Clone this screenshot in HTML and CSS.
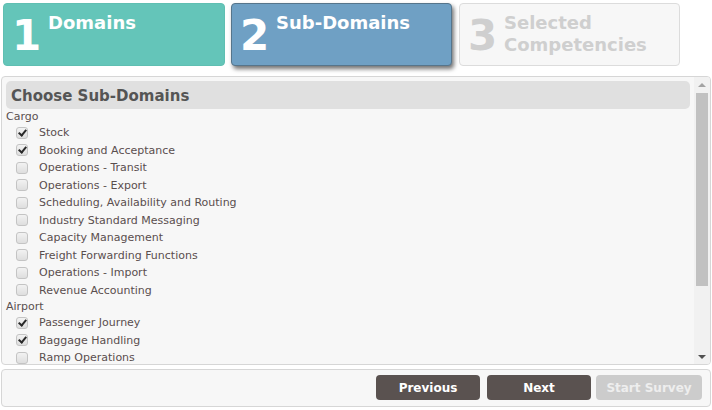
FILE: index.html
```html
<!DOCTYPE html>
<html>
<head>
<meta charset="utf-8">
<link rel="stylesheet" href="styles.css">
</head>
<body>
<div class="steps">
  <div class="step step-done">
    <span class="step-num">1</span>
    <span class="step-label">Domains</span>
  </div>
  <div class="step step-active">
    <span class="step-num">2</span>
    <span class="step-label">Sub-Domains</span>
  </div>
  <div class="step step-todo">
    <span class="step-num">3</span>
    <span class="step-label">Selected<br>Competencies</span>
  </div>
</div>

<div class="panel">
  <div class="panel-scroll">
    <div class="panel-title">Choose Sub-Domains</div>
    <div class="cat">Cargo</div>
    <label class="item"><input type="checkbox" class="cb" checked><span>Stock</span></label>
    <label class="item"><input type="checkbox" class="cb" checked><span>Booking and Acceptance</span></label>
    <label class="item"><input type="checkbox" class="cb"><span>Operations - Transit</span></label>
    <label class="item"><input type="checkbox" class="cb"><span>Operations - Export</span></label>
    <label class="item"><input type="checkbox" class="cb"><span>Scheduling, Availability and Routing</span></label>
    <label class="item"><input type="checkbox" class="cb"><span>Industry Standard Messaging</span></label>
    <label class="item"><input type="checkbox" class="cb"><span>Capacity Management</span></label>
    <label class="item"><input type="checkbox" class="cb"><span>Freight Forwarding Functions</span></label>
    <label class="item"><input type="checkbox" class="cb"><span>Operations - Import</span></label>
    <label class="item"><input type="checkbox" class="cb"><span>Revenue Accounting</span></label>
    <div class="cat">Airport</div>
    <label class="item"><input type="checkbox" class="cb" checked><span>Passenger Journey</span></label>
    <label class="item"><input type="checkbox" class="cb" checked><span>Baggage Handling</span></label>
    <label class="item"><input type="checkbox" class="cb"><span>Ramp Operations</span></label>
  </div>
  <div class="sbar">
    <div class="sbar-up"></div>
    <div class="sbar-track"><div class="sbar-thumb"></div></div>
    <div class="sbar-down"></div>
  </div>
</div>

<div class="footer">
  <button class="btn btn-prev">Previous</button>
  <button class="btn btn-next">Next</button>
  <button class="btn btn-off">Start Survey</button>
</div>
</body>
</html>
```

FILE: styles.css
```css
html, body {
  margin: 0;
  padding: 0;
  background: #ffffff;
}
body {
  font-family: "DejaVu Sans", Verdana, sans-serif;
  width: 712px;
  height: 410px;
  overflow: hidden;
  padding: 3px 0 0 1px;
  box-sizing: border-box;
}

.steps {
  display: flex;
  height: 63px;
  margin-left: 2px;
}
.step {
  box-sizing: border-box;
  height: 63px;
  border-radius: 4px;
  display: flex;
  align-items: flex-start;
  color: #fff;
  font-weight: bold;
  padding-left: 8px;
}
.step-num {
  font-size: 42px;
  line-height: 42px;
  margin-top: 11px;
  width: 29px;
  margin-right: 7px;
}
.step-label {
  font-size: 18px;
  line-height: 22px;
  margin-top: 8px;
}
.step-done {
  width: 222px;
  background: #64c5b9;
  border: 1px solid #5fbfb2;
}
.step-active {
  width: 221px;
  margin-left: 6px;
  background: #6fa0c4;
  border: 1px solid #56758b;
  box-shadow: 2px 3px 4px rgba(0, 0, 0, 0.55);
}
.step-todo {
  width: 221px;
  margin-left: 7px;
  background: #f7f7f7;
  border: 1px solid #dcdcdc;
  color: #cfcfcf;
}

.panel {
  margin-top: 10px;
  width: 710px;
  height: 289px;
  box-sizing: border-box;
  border: 1px solid #d6d6d6;
  border-radius: 4px;
  background: #f7f7f7;
  display: flex;
  overflow: hidden;
}
.panel-scroll {
  flex: 1;
  overflow: hidden;
  padding: 4px 4px 0 4px;
}
.panel-title {
  height: 28px;
  background: #e0e0e0;
  border-radius: 5px;
  color: #555;
  font-weight: bold;
  font-size: 15px;
  line-height: 30px;
  padding-left: 5px;
}
.cat {
  font-size: 11px;
  line-height: 14px;
  padding-top: 1px;
  color: #5a5050;
}
.item {
  display: flex;
  align-items: center;
  height: 17.5px;
  font-size: 11px;
  color: #5a4e4e;
  padding-left: 10px;
}
.cb {
  -webkit-appearance: none;
  appearance: none;
  width: 12px;
  height: 12px;
  margin: 0 11px 0 0;
  border: 1px solid #c4c4c4;
  border-radius: 3px;
  background: linear-gradient(#f2f2f2, #dedede);
  position: relative;
  box-sizing: border-box;
}
.cb:checked::after {
  content: "";
  position: absolute;
  left: 3px;
  top: 0px;
  width: 3px;
  height: 6px;
  border: solid #2a2a2a;
  border-width: 0 2px 2px 0;
  transform: rotate(40deg);
}

.sbar {
  width: 16px;
  display: flex;
  flex-direction: column;
  background: #f1f1f1;
}
.sbar-up, .sbar-down {
  height: 15px;
  display: flex;
  align-items: center;
  justify-content: center;
}
.sbar-up::before {
  content: "";
  border-left: 4px solid transparent;
  border-right: 4px solid transparent;
  border-bottom: 4px solid #a3a3a3;
}
.sbar-down::before {
  content: "";
  border-left: 4px solid transparent;
  border-right: 4px solid transparent;
  border-top: 4px solid #505050;
}
.sbar-track {
  flex: 1;
  padding: 1px 2px;
}
.sbar-thumb {
  height: 193px;
  background: #c1c1c1;
}

.footer {
  margin-top: 4px;
  width: 710px;
  height: 38px;
  box-sizing: border-box;
  border: 1px solid #d6d6d6;
  border-radius: 4px;
  background: #f7f7f7;
  display: flex;
  justify-content: flex-end;
  align-items: flex-start;
  padding: 5px 8px 0 0;
}
.btn {
  height: 25px;
  border: none;
  border-radius: 4px;
  font-family: "DejaVu Sans", Verdana, sans-serif;
  font-weight: bold;
  font-size: 12px;
  color: #fff;
  padding: 0;
}
.btn-prev {
  width: 104px;
  background: #5a5250;
}
.btn-next {
  width: 104px;
  margin-left: 7px;
  background: #5a5250;
}
.btn-off {
  width: 106px;
  margin-left: 5px;
  background: #cccccc;
  color: #eeeeee;
}
```
